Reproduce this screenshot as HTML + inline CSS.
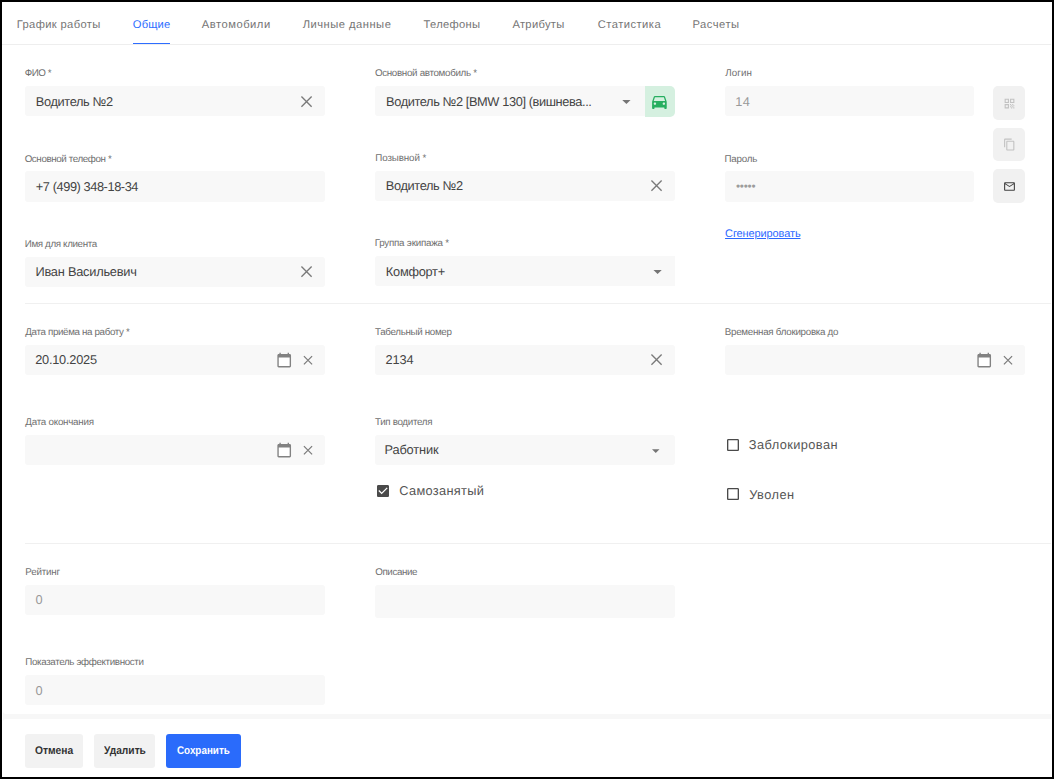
<!DOCTYPE html>
<html lang="ru"><head><meta charset="utf-8"><title>Водитель</title>
<style>
html,body{margin:0;padding:0;background:#fff;}
body{width:1054px;height:779px;position:relative;overflow:hidden;font-family:"Liberation Sans", sans-serif;}
#frame{position:absolute;left:0;top:0;width:1050px;height:775px;border:2px solid #000;pointer-events:none;z-index:10;}
.a{position:absolute;}
.t{position:absolute;white-space:nowrap;line-height:normal;text-rendering:geometricPrecision;}
.in{position:absolute;background:#f8f8f8;border-radius:3px;}
.sep{position:absolute;height:1px;background:#efefef;}
.btn{position:absolute;border-radius:3px;}
svg{position:absolute;display:block;overflow:visible;}
</style></head><body>

<!-- tab bar -->
<div class="sep" style="left:2px;top:44px;width:1049px;background:#eeeeee;"></div>
<div class="a" style="left:133px;top:42.6px;width:37px;height:1.5px;background:#2e6dff;"></div>
<!-- inputs row 1 -->
<div class="in" style="left:25px;top:86px;width:300px;height:30px;"></div>
<div class="in" style="left:375px;top:86px;width:271px;height:30px;border-radius:3px 0 0 3px;"></div>
<div class="in" style="left:725px;top:86px;width:249px;height:30px;"></div>
<!-- row 2 -->
<div class="in" style="left:25px;top:171px;width:300px;height:31px;"></div>
<div class="in" style="left:375px;top:171px;width:300px;height:30px;"></div>
<div class="in" style="left:725px;top:171px;width:249px;height:31px;"></div>
<!-- row 3 -->
<div class="in" style="left:25px;top:257px;width:300px;height:30px;"></div>
<div class="in" style="left:375px;top:256px;width:300px;height:30px;border-radius:3px 0 0 3px;"></div>
<div class="sep" style="left:25px;top:303px;width:1026px;background:#f0f0f0;"></div>
<!-- row 4 -->
<div class="in" style="left:25px;top:345px;width:300px;height:30px;"></div>
<div class="in" style="left:375px;top:345px;width:300px;height:30px;"></div>
<div class="in" style="left:725px;top:345px;width:300px;height:30px;"></div>
<!-- row 5 -->
<div class="in" style="left:25px;top:435px;width:300px;height:30px;"></div>
<div class="in" style="left:375px;top:435px;width:300px;height:30px;"></div>
<div class="sep" style="left:25px;top:543px;width:1026px;background:#f0f0f0;"></div>
<!-- row 6 -->
<div class="in" style="left:25px;top:585px;width:300px;height:30px;"></div>
<div class="in" style="left:375px;top:585px;width:300px;height:33px;"></div>
<!-- row 7 -->
<div class="in" style="left:25px;top:675px;width:300px;height:30px;"></div>
<!-- footer strip -->
<div class="a" style="left:3px;top:711px;width:1048px;height:11px;background:#f7f7f7;"></div>
<div class="a" style="left:3px;top:706px;width:1048px;height:8px;background:#fff;border-radius:0 0 0 3px;"></div>
<div class="a" style="left:3px;top:719px;width:1048px;height:8px;background:#fff;border-radius:3px 0 0 0;"></div>
<!-- buttons -->
<div class="btn" style="left:25px;top:734px;width:58px;height:34px;background:#f2f2f2;"></div>
<div class="btn" style="left:94px;top:734px;width:61px;height:34px;background:#f2f2f2;"></div>
<div class="btn" style="left:166px;top:734px;width:75px;height:34px;background:#2a6bfb;"></div>
<!-- side buttons -->
<div class="btn" style="left:993px;top:86px;width:32px;height:34px;background:#f1f1f1;border-radius:5px;"></div>
<div class="btn" style="left:993px;top:128px;width:32px;height:33px;background:#f1f1f1;border-radius:5px;"></div>
<div class="btn" style="left:993px;top:169px;width:32px;height:34px;background:#f1f1f1;border-radius:5px;"></div>
<!-- car button -->
<div class="a" style="left:645px;top:86px;width:30px;height:31px;background:#d5f0e0;border-radius:0 5px 5px 0;"></div>

<svg width="1054" height="779" viewBox="0 0 1054 779" style="left:0;top:0;">
<g transform="translate(649.66,91.95) scale(0.81250)" fill="#27ae60"><path d="M18.92 6.01C18.72 5.42 18.16 5 17.5 5h-11c-.66 0-1.21.42-1.42 1.01L3 12v8c0 .55.45 1 1 1h1c.55 0 1-.45 1-1v-1h12v1c0 .55.45 1 1 1h1c.55 0 1-.45 1-1v-8l-2.080-5.990zM6.500 16c-.83 0-1.500-.67-1.500-1.500S5.670 13 6.500 13s1.500.67 1.500 1.500S7.330 16 6.500 16zm11 0c-.83 0-1.500-.67-1.500-1.500s.67-1.500 1.500-1.500 1.500.67 1.500 1.500-.67 1.500-1.500 1.500zM5 11l1.500-4.500h11L19 11H5z"/></g>
<g transform="translate(616.40,91.60) scale(0.83333)" fill="#757575"><path d="M7 10l5 5 5-5z"/></g>
<g transform="translate(647.60,261.60) scale(0.83333)" fill="#757575"><path d="M7 10l5 5 5-5z"/></g>
<g transform="translate(646.75,441.70) scale(0.75000)" fill="#757575"><path d="M7 10l5 5 5-5z"/></g>
<g transform="translate(1003.00,97.00) scale(0.54167)" fill="#c2c2c2"><path d="M3 11h8V3H3v8zm2-6h4v4H5V5zM3 21h8v-8H3v8zm2-6h4v4H5v-4zM13 3v8h8V3h-8zm6 6h-4V5h4v4zM19 19h2v2h-2zM13 13h2v2h-2zM15 15h2v2h-2zM13 17h2v2h-2zM15 19h2v2h-2zM17 17h2v2h-2zM17 13h2v2h-2zM19 15h2v2h-2z"/></g>
<g transform="translate(1003.00,138.00) scale(0.54167)" fill="#c2c2c2"><path d="M16 1H4c-1.100 0-2 .9-2 2v14h2V3h12V1zm3 4H8c-1.100 0-2 .9-2 2v14c0 1.100.9 2 2 2h11c1.100 0 2-.9 2-2V7c0-1.100-.9-2-2-2zm0 16H8V7h11v14z"/></g>
<g transform="translate(1003.00,180.00) scale(0.54167)" fill="#404040"><path d="M20 4H4c-1.100 0-1.990.9-1.990 2L2 18c0 1.100.9 2 2 2h16c1.100 0 2-.9 2-2V6c0-1.100-.9-2-2-2zm0 14H4V8l8 5 8-5v10zm-8-7L4 6h16l-8 5z"/></g>
<path d="M301.43 96.45L311.63 106.65M311.63 96.45L301.43 106.65" stroke="#7a7a7a" stroke-width="1.35" fill="none"/>
<path d="M651.43 180.45L661.63 190.65M661.63 180.45L651.43 190.65" stroke="#7a7a7a" stroke-width="1.35" fill="none"/>
<path d="M301.43 266.45L311.63 276.65M311.63 266.45L301.43 276.65" stroke="#7a7a7a" stroke-width="1.35" fill="none"/>
<path d="M651.43 354.45L661.63 364.65M661.63 354.45L651.43 364.65" stroke="#7a7a7a" stroke-width="1.35" fill="none"/>
<g transform="translate(276.00,352.08) scale(0.68333,0.66667)" fill="#828282"><rect x="3.5" y="7.5" width="17" height="14" fill="#fff"/><path d="M20 3h-1V1h-2v2H7V1H5v2H4c-1.100 0-2 .9-2 2v16c0 1.100.9 2 2 2h16c1.100 0 2-.9 2-2V5c0-1.100-.9-2-2-2zm0 18H4V8h16v13z"/></g>
<g transform="translate(276.00,442.08) scale(0.68333,0.66667)" fill="#828282"><rect x="3.5" y="7.5" width="17" height="14" fill="#fff"/><path d="M20 3h-1V1h-2v2H7V1H5v2H4c-1.100 0-2 .9-2 2v16c0 1.100.9 2 2 2h16c1.100 0 2-.9 2-2V5c0-1.100-.9-2-2-2zm0 18H4V8h16v13z"/></g>
<g transform="translate(976.00,352.08) scale(0.68333,0.66667)" fill="#828282"><rect x="3.5" y="7.5" width="17" height="14" fill="#fff"/><path d="M20 3h-1V1h-2v2H7V1H5v2H4c-1.100 0-2 .9-2 2v16c0 1.100.9 2 2 2h16c1.100 0 2-.9 2-2V5c0-1.100-.9-2-2-2zm0 18H4V8h16v13z"/></g>
<path d="M303.90 356.10L312.10 364.30M312.10 356.10L303.90 364.30" stroke="#7a7a7a" stroke-width="1.2" fill="none"/>
<path d="M303.90 446.10L312.10 454.30M312.10 446.10L303.90 454.30" stroke="#7a7a7a" stroke-width="1.2" fill="none"/>
<path d="M1003.90 356.10L1012.10 364.30M1012.10 356.10L1003.90 364.30" stroke="#7a7a7a" stroke-width="1.2" fill="none"/>
<g transform="translate(375.00,483.00) scale(0.66667)" fill="#4a4a4a"><path d="M19 3H5c-1.110 0-2 .9-2 2v14c0 1.100.89 2 2 2h14c1.110 0 2-.9 2-2V5c0-1.100-.89-2-2-2zm-9 14l-5-5 1.410-1.410L10 14.170l7.590-7.590L19 8l-9 9z"/></g>
<g transform="translate(725.00,437.00) scale(0.66667)" fill="#4a4a4a"><path d="M19 5v14H5V5h14m0-2H5c-1.100 0-2 .9-2 2v14c0 1.100.9 2 2 2h14c1.100 0 2-.9 2-2V5c0-1.100-.9-2-2-2z"/></g>
<g transform="translate(725.00,486.00) scale(0.66667)" fill="#4a4a4a"><path d="M19 5v14H5V5h14m0-2H5c-1.100 0-2 .9-2 2v14c0 1.100.9 2 2 2h14c1.100 0 2-.9 2-2V5c0-1.100-.9-2-2-2z"/></g>
</svg>

<span class="t" id="t1" style="left:16.78px;top:19.00px;font-size:11.2px;font-weight:400;color:#757575;letter-spacing:0.346px;">График работы</span>
<span class="t" id="t2" style="left:132.86px;top:19.00px;font-size:11.2px;font-weight:400;color:#2e6dff;letter-spacing:0.139px;">Общие</span>
<span class="t" id="t3" style="left:201.68px;top:19.00px;font-size:11.2px;font-weight:400;color:#757575;letter-spacing:0.528px;">Автомобили</span>
<span class="t" id="t4" style="left:302.66px;top:19.00px;font-size:11.2px;font-weight:400;color:#757575;letter-spacing:0.490px;">Личные данные</span>
<span class="t" id="t5" style="left:423.51px;top:19.00px;font-size:11.2px;font-weight:400;color:#757575;letter-spacing:0.292px;">Телефоны</span>
<span class="t" id="t6" style="left:512.44px;top:19.00px;font-size:11.2px;font-weight:400;color:#757575;letter-spacing:0.295px;">Атрибуты</span>
<span class="t" id="t7" style="left:597.77px;top:19.00px;font-size:11.2px;font-weight:400;color:#757575;letter-spacing:0.453px;">Статистика</span>
<span class="t" id="t8" style="left:692.45px;top:19.00px;font-size:11.2px;font-weight:400;color:#757575;letter-spacing:0.504px;">Расчеты</span>
<span class="t" id="l1" style="left:24.63px;top:68.00px;font-size:9.8px;font-weight:400;color:#6f6f6f;letter-spacing:-0.417px;">ФИО *</span>
<span class="t" id="l2" style="left:374.91px;top:68.00px;font-size:9.8px;font-weight:400;color:#6f6f6f;letter-spacing:-0.324px;">Основной автомобиль *</span>
<span class="t" id="l3" style="left:725.23px;top:68.00px;font-size:9.8px;font-weight:400;color:#6f6f6f;letter-spacing:0.083px;">Логин</span>
<span class="t" id="l4" style="left:24.65px;top:154.00px;font-size:9.8px;font-weight:400;color:#6f6f6f;letter-spacing:-0.393px;">Основной телефон *</span>
<span class="t" id="l5" style="left:375.25px;top:153.00px;font-size:9.8px;font-weight:400;color:#6f6f6f;letter-spacing:-0.110px;">Позывной *</span>
<span class="t" id="l6" style="left:724.47px;top:154.00px;font-size:9.8px;font-weight:400;color:#6f6f6f;letter-spacing:-0.231px;">Пароль</span>
<span class="t" id="l7" style="left:24.81px;top:239.00px;font-size:9.8px;font-weight:400;color:#6f6f6f;letter-spacing:-0.369px;">Имя для клиента</span>
<span class="t" id="l8" style="left:374.64px;top:238.00px;font-size:9.8px;font-weight:400;color:#6f6f6f;letter-spacing:-0.221px;">Группа экипажа *</span>
<span class="t" id="l9" style="left:25.35px;top:327.00px;font-size:9.8px;font-weight:400;color:#6f6f6f;letter-spacing:-0.361px;">Дата приёма на работу *</span>
<span class="t" id="l10" style="left:374.97px;top:327.00px;font-size:9.8px;font-weight:400;color:#6f6f6f;letter-spacing:-0.334px;">Табельный номер</span>
<span class="t" id="l11" style="left:724.81px;top:327.00px;font-size:9.8px;font-weight:400;color:#6f6f6f;letter-spacing:-0.289px;">Временная блокировка до</span>
<span class="t" id="l12" style="left:25.35px;top:417.00px;font-size:9.8px;font-weight:400;color:#6f6f6f;letter-spacing:-0.245px;">Дата окончания</span>
<span class="t" id="l13" style="left:374.97px;top:417.00px;font-size:9.8px;font-weight:400;color:#6f6f6f;letter-spacing:-0.330px;">Тип водителя</span>
<span class="t" id="l14" style="left:25.25px;top:567.00px;font-size:9.8px;font-weight:400;color:#6f6f6f;letter-spacing:-0.200px;">Рейтинг</span>
<span class="t" id="l15" style="left:375.29px;top:567.00px;font-size:9.8px;font-weight:400;color:#6f6f6f;letter-spacing:-0.425px;">Описание</span>
<span class="t" id="l16" style="left:25.25px;top:657.00px;font-size:9.8px;font-weight:400;color:#6f6f6f;letter-spacing:-0.360px;">Показатель эффективности</span>
<span class="t" id="v1" style="left:35.85px;top:94.00px;font-size:12.8px;font-weight:400;color:#444444;letter-spacing:-0.373px;">Водитель №2</span>
<span class="t" id="v2" style="left:386.07px;top:94.00px;font-size:12.8px;font-weight:400;color:#444444;letter-spacing:-0.395px;">Водитель №2 [BMW 130] (вишнева...</span>
<span class="t" id="v3" style="left:735.34px;top:94.00px;font-size:12.8px;font-weight:400;color:#999999;letter-spacing:0.343px;">14</span>
<span class="t" id="v4" style="left:35.80px;top:179.00px;font-size:12.8px;font-weight:400;color:#444444;letter-spacing:-0.426px;">+7 (499) 348-18-34</span>
<span class="t" id="v5" style="left:385.85px;top:178.00px;font-size:12.8px;font-weight:400;color:#444444;letter-spacing:-0.373px;">Водитель №2</span>
<span class="t" id="v6" style="left:735.96px;top:179.46px;font-size:11.8px;font-weight:400;color:#9c9c9c;letter-spacing:-0.247px;">•••••</span>
<span class="t" id="v7" style="left:35.48px;top:264.00px;font-size:12.8px;font-weight:400;color:#444444;letter-spacing:-0.234px;">Иван Васильевич</span>
<span class="t" id="v8" style="left:385.86px;top:264.00px;font-size:12.8px;font-weight:400;color:#444444;letter-spacing:-0.271px;">Комфорт+</span>
<span class="t" id="v9" style="left:35.20px;top:352.00px;font-size:12.8px;font-weight:400;color:#444444;letter-spacing:-0.243px;">20.10.2025</span>
<span class="t" id="v10" style="left:385.56px;top:352.00px;font-size:12.8px;font-weight:400;color:#444444;letter-spacing:-0.160px;">2134</span>
<span class="t" id="v11" style="left:384.48px;top:442.00px;font-size:12.8px;font-weight:400;color:#444444;letter-spacing:-0.138px;">Работник</span>
<span class="t" id="v12" style="left:35.40px;top:592.00px;font-size:12.8px;font-weight:400;color:#999999;letter-spacing:0.000px;">0</span>
<span class="t" id="v13" style="left:35.40px;top:683.00px;font-size:12.8px;font-weight:400;color:#999999;letter-spacing:0.000px;">0</span>
<span class="t" id="k1" style="left:725.05px;top:228.00px;font-size:11px;font-weight:400;color:#2b67ff;letter-spacing:-0.110px;text-decoration:underline;">Сгенерировать</span>
<span class="t" id="c1" style="left:399.31px;top:483.00px;font-size:12.8px;font-weight:400;color:#555;letter-spacing:0.312px;">Самозанятый</span>
<span class="t" id="c2" style="left:748.85px;top:437.00px;font-size:12.8px;font-weight:400;color:#555;letter-spacing:0.411px;">Заблокирован</span>
<span class="t" id="c3" style="left:749.21px;top:486.50px;font-size:12.8px;font-weight:400;color:#555;letter-spacing:0.464px;">Уволен</span>
<span class="t" id="b1" style="left:34.60px;top:745.00px;font-size:11.2px;font-weight:700;color:#333;letter-spacing:0.000px;transform:scaleX(0.9167);transform-origin:0 0;">Отмена</span>
<span class="t" id="b2" style="left:103.95px;top:745.00px;font-size:11.2px;font-weight:700;color:#333;letter-spacing:0.000px;transform:scaleX(0.9125);transform-origin:0 0;">Удалить</span>
<span class="t" id="b3" style="left:176.92px;top:745.00px;font-size:11.2px;font-weight:700;color:#fff;letter-spacing:0.000px;transform:scaleX(0.8810);transform-origin:0 0;">Сохранить</span>
<div id="frame"></div>
</body></html>
